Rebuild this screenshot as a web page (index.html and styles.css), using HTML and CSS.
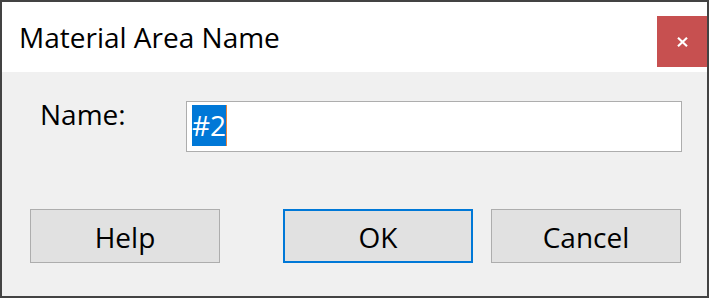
FILE: index.html
```html
<!DOCTYPE html>
<html lang="en">
<head>
<meta charset="utf-8">
<title>Material Area Name</title>
<link rel="stylesheet" href="styles.css">
</head>
<body>
<div class="window">
  <div class="titlebar">
    <div class="title">Material Area Name</div>
    <div class="close" aria-label="Close">
      <svg width="11" height="10" viewBox="0 0 11 10"><path d="M1 0.8 L10 9.2 M10 0.8 L1 9.2" stroke="#fff" stroke-width="2.2" fill="none"/></svg>
    </div>
  </div>
  <div class="content">
    <div class="field-row">
      <div class="label">Name:</div>
      <div class="input"><span class="sel">#2</span></div>
    </div>
    <div class="buttons">
      <div class="btn btn-help">Help</div>
      <div class="btn btn-ok">OK</div>
      <div class="btn btn-cancel">Cancel</div>
    </div>
  </div>
</div>
</body>
</html>
```
FILE: styles.css
```css
html, body {
  margin: 0;
  padding: 0;
  background: #ffffff;
}

.window {
  width: 709px;
  height: 298px;
  box-sizing: border-box;
  border: 2px solid #434343;
  background: #f0f0f0;
  font-family: "Open Sans", "Noto Sans", sans-serif;
  color: #000;
  display: flex;
  flex-direction: column;
}

.titlebar {
  height: 70px;
  background: #ffffff;
  display: flex;
  align-items: flex-start;
  justify-content: space-between;
}

.title {
  font-size: 28px;
  line-height: 36px;
  padding-left: 17px;
  padding-top: 17px;
}

.close {
  width: 50px;
  height: 51px;
  margin-top: 14px;
  background: #c75050;
  display: flex;
  align-items: center;
  justify-content: center;
}

.close svg {
  display: block;
}

.content {
  flex: 1;
  padding: 29px 25px 0 28px;
  display: flex;
  flex-direction: column;
  font-size: 28px;
}

.field-row {
  display: flex;
  align-items: flex-start;
  height: 51px;
}

.label {
  width: 156px;
  box-sizing: border-box;
  padding-left: 10px;
  line-height: 26px;
}

.input {
  flex: 1;
  height: 51px;
  box-sizing: border-box;
  border: 1px solid #adadad;
  background: #ffffff;
  padding: 3px 5px;
}

.sel {
  display: inline-block;
  height: 41px;
  line-height: 41px;
  background: #0078d7;
  color: #ffffff;
  border-right: 1px solid #e8833a;
}

.buttons {
  display: flex;
  margin-top: 57px;
}

.btn {
  width: 190px;
  height: 54px;
  box-sizing: border-box;
  border: 1px solid #adadad;
  background: #e1e1e1;
  display: flex;
  align-items: center;
  justify-content: center;
  line-height: 36px;
  padding-top: 1px;
}

.btn-ok {
  margin-left: 63px;
  border: 2px solid #0078d7;
}

.btn-cancel {
  margin-left: 18px;
}
```
